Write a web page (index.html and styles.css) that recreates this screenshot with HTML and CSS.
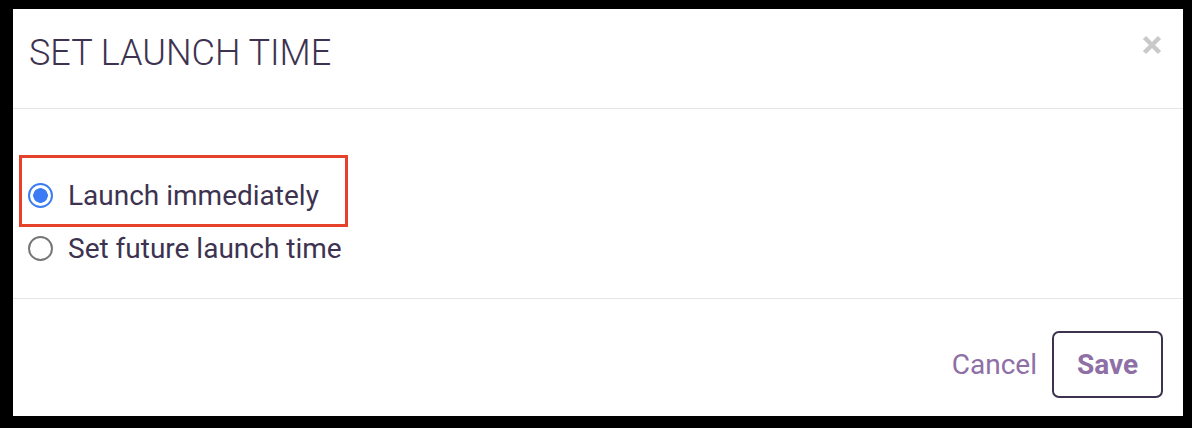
FILE: index.html
```html
<!DOCTYPE html>
<html>
<head>
<meta charset="utf-8">
<link rel="stylesheet" href="styles.css">
</head>
<body>
<div class="frame">
  <div class="dialog">
    <div class="header">
      <h1 class="title">SET LAUNCH TIME</h1>
      <button class="close" aria-label="Close">
        <svg width="20" height="20" viewBox="0 0 20 20"><path d="M2.5 2.5 L17.5 17.5 M17.5 2.5 L2.5 17.5" stroke="#c9c9c9" stroke-width="4.5" stroke-linecap="butt"/></svg>
      </button>
    </div>
    <div class="body">
      <label class="option highlighted">
        <span class="radio checked"></span>
        <span class="label-text">Launch immediately</span>
      </label>
      <label class="option">
        <span class="radio"></span>
        <span class="label-text">Set future launch time</span>
      </label>
    </div>
    <div class="footer">
      <button class="btn-cancel">Cancel</button>
      <button class="btn-save">Save</button>
    </div>
  </div>
</div>
</body>
</html>
```
FILE: styles.css
```css
html, body {
  margin: 0;
  padding: 0;
  background: #000;
}
body {
  width: 1192px;
  height: 428px;
  font-family: Roboto, "Liberation Sans", sans-serif;
  color: #3d3350;
}
.frame {
  padding: 9px 9px 12px 13px;
  height: 428px;
  box-sizing: border-box;
}
.dialog {
  background: #fff;
  height: 407px;
  display: flex;
  flex-direction: column;
}
.header {
  height: 99px;
  border-bottom: 1px solid #e5e5e5;
  display: flex;
  align-items: flex-start;
  justify-content: space-between;
  padding: 0 21px 0 16px;
}
.title {
  margin: 0;
  padding-top: 24px;
  font-size: 36px;
  font-weight: 300;
  line-height: 40px;
  color: #3d3350;
}
.close {
  margin-top: 26px;
  background: none;
  border: 0;
  padding: 0;
  width: 20px;
  height: 20px;
  display: flex;
}
.body {
  height: 190px;
  border-bottom: 1px solid #e5e5e5;
  box-sizing: border-box;
  padding: 74px 0 0 15px;
  display: flex;
  flex-direction: column;
  gap: 28px;
}
.option {
  display: flex;
  align-items: center;
  gap: 15px;
  height: 25px;
  position: relative;
  font-size: 28px;
  width: max-content;
}
.option.highlighted::after {
  content: "";
  position: absolute;
  left: -9px;
  top: -28px;
  width: 323px;
  height: 66px;
  border: 3px solid #e5412b;
}
.radio {
  width: 25px;
  height: 25px;
  box-sizing: border-box;
  border-radius: 50%;
  border: 2px solid #767676;
  flex: none;
}
.radio.checked {
  border: 2.5px solid #3b7cf5;
  background: radial-gradient(circle, #3b7cf5 0 7px, #fff 7.5px);
}
.label-text {
  line-height: 25px;
}
.footer {
  flex: 1;
  display: flex;
  align-items: center;
  justify-content: flex-end;
  padding: 14px 20px 0 0;
  gap: 15px;
}
.btn-cancel {
  background: none;
  border: 0;
  padding: 0;
  font-family: inherit;
  font-size: 28px;
  color: #8e6fa6;
}
.btn-save {
  width: 111px;
  height: 67px;
  box-sizing: border-box;
  border: 2px solid #3d3350;
  border-radius: 7px;
  background: #fff;
  font-family: inherit;
  font-size: 28px;
  font-weight: 700;
  color: #8e6fa6;
  padding: 0;
}
```
